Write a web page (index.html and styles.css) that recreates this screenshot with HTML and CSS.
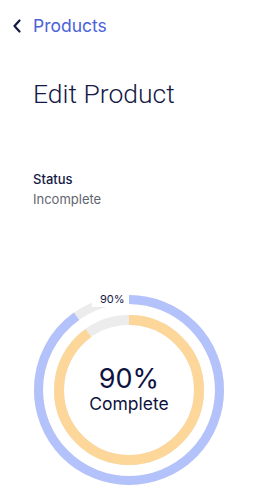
FILE: index.html
```html
<!DOCTYPE html>
<html lang="en">
<head>
  <meta charset="UTF-8" />
  <meta name="viewport" content="width=device-width, initial-scale=1" />
  <title>Edit Product</title>
  <link rel="stylesheet" href="styles.css">
</head>
<body>
  <header>
    <a href="#" class="back-link">
      <svg class="back-icon" viewBox="0 0 10 14" width="10" height="14">
        <path d="M7.5 1.5 L2.5 7 L7.5 12.5" fill="none" stroke="#141a45" stroke-width="2.2" stroke-linecap="round" stroke-linejoin="round" />
      </svg>
      <span>Products</span>
    </a>
  </header>

  <main class="content">
    <h1>Edit Product</h1>

    <div class="status">
      <div class="status-label">Status</div>
      <div class="status-value">Incomplete</div>
    </div>

    <div class="progress">
      <svg class="rings" viewBox="0 0 192 192" width="192" height="192">
        <g transform="rotate(-90 96 96)">
          <circle cx="96" cy="96" r="90.5" fill="none" stroke="#ececec" stroke-width="9" />
          <circle cx="96" cy="96" r="90.5" fill="none" stroke="#b3c2fa" stroke-width="9"
                  stroke-dasharray="511.8 568.6" />
          <circle cx="96" cy="96" r="70" fill="none" stroke="#ececec" stroke-width="10" />
          <circle cx="96" cy="96" r="70" fill="none" stroke="#fdd699" stroke-width="10"
                  stroke-dasharray="395.8 439.8" />
        </g>
      </svg>
      <span class="ring-label">90%</span>
      <div class="progress-text">
        <div class="progress-value">90%</div>
        <div class="progress-caption">Complete</div>
      </div>
    </div>
  </main>
</body>
</html>
```

FILE: styles.css
```css
body {
  margin: 0;
  padding: 0;
  font-family: 'Inter', 'Noto Sans', sans-serif;
  background: #fff;
  color: #141a45;
}

header {
  padding: 15px 0 0 12px;
}

.back-link {
  display: flex;
  align-items: center;
  gap: 11px;
  text-decoration: none;
  color: #4b62d9;
  font-size: 17.5px;
  font-weight: 400;
}

.back-icon {
  display: block;
}

.content {
  padding: 0 33px;
}

h1 {
  margin: 42px 0 0 0;
  font-family: 'Roboto', 'Inter', sans-serif;
  font-size: 26.5px;
  font-weight: 300;
  color: #141a45;
  line-height: 1.2;
}

.status {
  margin-top: 59px;
  font-size: 13px;
  line-height: 20px;
}

.status-label {
  font-weight: 500;
  color: #141a45;
}

.status-value {
  color: #62656f;
}

.progress {
  position: relative;
  width: 192px;
  height: 192px;
  margin-top: 85px;
}

.rings {
  display: block;
}

.ring-label {
  position: absolute;
  left: 59px;
  top: -3px;
  padding: 0 4px 0 8px;
  background: #fff;
  font-size: 11px;
  line-height: 16px;
  color: #141a45;
}

.progress-text {
  position: absolute;
  inset: 0;
  display: flex;
  flex-direction: column;
  align-items: center;
  justify-content: center;
  gap: 6px;
  text-align: center;
}

.progress-value {
  font-size: 27px;
  line-height: 22px;
  color: #0e1240;
}

.progress-caption {
  font-size: 17.5px;
  line-height: 16px;
  color: #0e1240;
}
```
